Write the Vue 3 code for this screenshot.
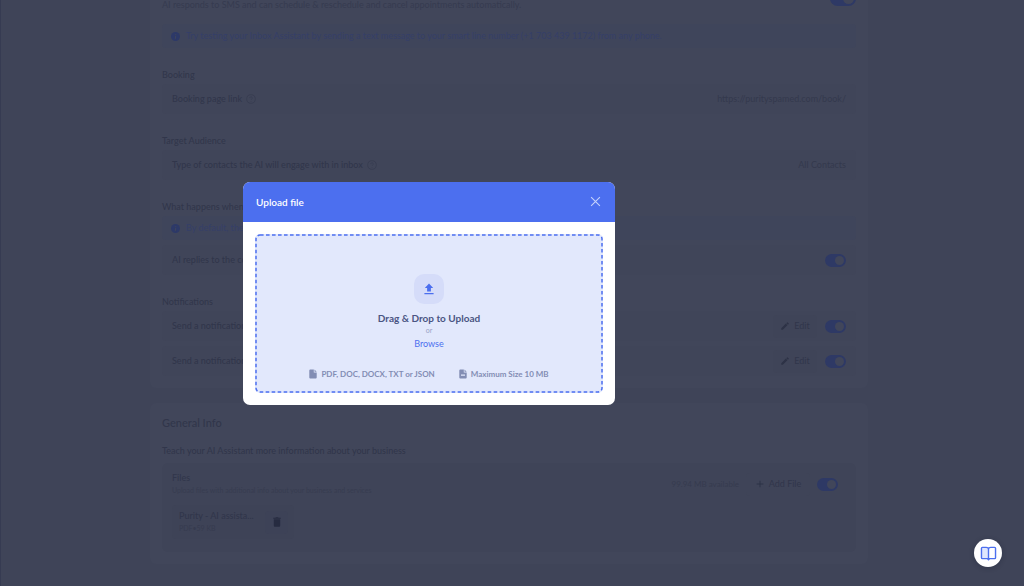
<script setup>
import { ref } from 'vue'

const assistant = ref(true)
const replies = ref(true)
const files = ref(true)
const notifications = ref([
  { id: 1, label: 'Send a notification', on: true },
  { id: 2, label: 'Send a notification', on: true },
])
</script>

<template>
  <div class="page">
    <main class="content">
      <section class="card first">
        <div class="intro">
          <p>AI responds to SMS and can schedule &amp; reschedule and cancel appointments automatically.</p>
          <input v-model="assistant" class="toggle large" type="checkbox" aria-label="Inbox Assistant" />
        </div>
        <div class="banner">
          <svg class="info" viewBox="0 0 10 10"><circle cx="5" cy="5" r="5" /><path d="M5.300 2.200v1M4.400 4.600h.8l-.4 2.800h.8" /></svg>
          <span>Try testing your Inbox Assistant by sending a text message to your smart line number (+1 703 439 1172) from any phone.</span>
        </div>

        <h3>Booking</h3>
        <div class="row">
          <span class="label">Booking page link</span>
          <svg class="help" viewBox="0 0 10 10"><circle cx="5" cy="5" r="4.4" /><path d="M3.7 4.1c0-1.8 2.7-1.7 2.7-.1 0 .9-1.4 1-1.4 2M5 7v.6" /></svg>
          <a class="value" href="#">https://purityspamed.com/book/</a>
        </div>

        <h3>Target Audience</h3>
        <div class="row">
          <span class="label">Type of contacts the AI will engage with in inbox</span>
          <svg class="help" viewBox="0 0 10 10"><circle cx="5" cy="5" r="4.4" /><path d="M3.7 4.1c0-1.8 2.7-1.7 2.7-.1 0 .9-1.4 1-1.4 2M5 7v.6" /></svg>
          <span class="value">All Contacts</span>
        </div>

        <h3>What happens when</h3>
        <div class="banner">
          <svg class="info" viewBox="0 0 10 10"><circle cx="5" cy="5" r="5" /><path d="M5.300 2.200v1M4.400 4.600h.8l-.4 2.800h.8" /></svg>
          <span>By default, the</span>
        </div>
        <div class="row stacked">
          <label class="label" for="replies">AI replies to the co</label>
          <input id="replies" v-model="replies" class="toggle end" type="checkbox" />
        </div>

        <h3>Notifications</h3>
        <div v-for="n in notifications" :key="n.id" class="row">
          <label class="label" :for="'notification-' + n.id">{{ n.label }}</label>
          <button class="btn edit end" type="button">
            <svg class="glyph" viewBox="0 0 24 24"><path d="M3 17.2V21h3.8L17.8 9.9l-3.7-3.7zM20.7 7a1 1 0 0 0 0-1.4l-2.3-2.3a1 1 0 0 0-1.4 0l-1.8 1.8 3.7 3.7z" /></svg>
            Edit
          </button>
          <input :id="'notification-' + n.id" v-model="n.on" class="toggle" type="checkbox" />
        </div>
      </section>

      <section class="card">
        <h2>General Info</h2>
        <p class="lead">Teach your AI Assistant more information about your business</p>
        <div class="files">
          <div class="files-head">
            <div class="files-title">
              <label for="files">Files</label>
              <p>Upload files with additional info about your business and services</p>
            </div>
            <span class="space">99.94 MB available</span>
            <button class="btn add" type="button">
              <svg class="glyph" viewBox="0 0 24 24"><path d="M10.800 4h2.400v6.800H20v2.400h-6.800V20h-2.400v-6.800H4v-2.400h6.800z" /></svg>
              Add File
            </button>
            <input id="files" v-model="files" class="toggle" type="checkbox" />
          </div>
          <div class="file">
            <div class="file-text">
              <strong>Purity - AI assista...</strong>
              <span>PDF•59 KB</span>
            </div>
            <button class="btn trash" type="button" aria-label="Delete file">
              <svg viewBox="0 0 8 10"><path d="M.3.8h2L3 .2h2l.7.6h2v1H.3zM.8 2.200h6.400v6.600q0 1-1 1H1.800q-1 0-1-1z" /></svg>
            </button>
          </div>
        </div>
      </section>
    </main>

    <div class="overlay">
      <div class="modal" role="dialog" aria-modal="true" aria-labelledby="modal-title">
        <header>
          <h1 id="modal-title">Upload file</h1>
          <button class="close" type="button" aria-label="Close">
            <svg viewBox="0 0 10 10"><path d="M1 1l8 8M9 1l-8 8" /></svg>
          </button>
        </header>
        <div class="body">
          <div class="dropzone">
            <svg class="frame" aria-hidden="true"><rect x="1" y="1" rx="4" /></svg>
            <span class="upload">
              <svg viewBox="0 0 10 12"><path d="M5 .6l4.200 4.400H6.900V8.600H3.100V5H.8zM.4 9.900h9.200v1.400H.4z" /></svg>
            </span>
            <strong>Drag &amp; Drop to Upload</strong>
            <span class="or">or</span>
            <button class="browse" type="button">Browse</button>
            <div class="hints">
              <span>
                <svg viewBox="0 0 8 10"><path d="M1 .5h3.800V3.400h2.900V8.500q0 1-1 1H1.300q-1 0-1-1v-7q0-1 1-1zM5.500.5l2.200 2.200H5.500z" /></svg>
                PDF, DOC, DOCX, TXT or JSON
              </span>
              <span>
                <svg viewBox="0 0 8 10"><path fill-rule="evenodd" d="M1.300.5h3.500V3.400h2.900V8.500q0 1-1 1H1.300q-1 0-1-1v-7q0-1 1-1zM5.500.5l2.200 2.200H5.500zM2 5.500v1.300h4V5.500z" /></svg>
                Maximum Size 10 MB
              </span>
            </div>
          </div>
        </div>
      </div>
    </div>

    <button class="guide" type="button" aria-label="Open guide">
      <svg viewBox="0 0 18 16">
        <path class="leaf" d="M2.500 1.500h4q2.500 0 2.500 2v10H2.500q-1 0-1-1v-10q0-1 1-1z" />
        <path d="M9 3.500q0-2 2.500-2h4q1 0 1 1v10q0 1-1 1H10L9 14.600l-1-1.100H2.500q-1 0-1-1v-10q0-1 1-1h4q2.500 0 2.500 2zv11" />
      </svg>
    </button>
  </div>
</template>

<style>
body {
  background: #3f4458;
}
</style>

<style scoped>
* {
  box-sizing: border-box;
}

.page {
  min-height: 100vh;
  display: flow-root;
  overflow: hidden;
  border-left: 1px solid #363b52;
  background: #3f4458;
  color: #31364b;
  font: 9px/12px Lato, "Liberation Sans", sans-serif;
}

h1, h2, h3, p {
  margin: 0;
}

button {
  border: 0;
  padding: 0;
  font: inherit;
  color: inherit;
  cursor: pointer;
}

.content {
  margin: -9px 156px 0 149px;
  display: flex;
  flex-direction: column;
  gap: 15px;
}

.card {
  padding: 12px;
  border-radius: 6px;
  background: #41465a;
}

.first {
  padding-top: 0;
}

.intro {
  height: 20px;
  margin-bottom: 13px;
  display: flex;
  align-items: flex-end;
  justify-content: space-between;
  color: #363b50;
}

.banner {
  height: 24px;
  padding: 0 9px;
  display: flex;
  align-items: center;
  gap: 6px;
  border-radius: 4px;
  background: #3f455b;
  color: #353f68;
}

.info {
  flex: none;
  width: 9px;
  height: 9px;
  fill: none;
  stroke: #41465a;
  stroke-width: 1;
}

.info circle {
  fill: #2d3968;
  stroke: none;
}

h3 {
  margin: 21px 0 3px;
  font-size: 9px;
  font-weight: 500;
}

.row {
  height: 30px;
  padding: 0 10px;
  display: flex;
  align-items: center;
  gap: 4px;
  border-radius: 4px;
  background: #404559;
}

.row + .row {
  margin-top: 5px;
}

.stacked {
  margin-top: 5px;
}

.label {
  font-weight: 500;
}

.help {
  width: 10px;
  height: 10px;
  fill: none;
  stroke: #373c50;
  stroke-width: 0.7;
}

.value {
  margin-left: auto;
  color: #34394d;
  text-decoration: none;
}

.end {
  margin-left: auto;
}

.btn {
  height: 23px;
  display: flex;
  align-items: center;
  justify-content: center;
  gap: 4px;
  border-radius: 4px;
  background: #3f4458;
}

.edit {
  width: 44px;
  margin-right: 4px;
}

.glyph {
  width: 10px;
  height: 10px;
  fill: #2d3246;
}

.toggle {
  appearance: none;
  flex: none;
  width: 21px;
  height: 13px;
  margin-block: 0;
  margin-right: 0;
  padding: 2px;
  display: flex;
  border-radius: 8px;
  background: #363b50;
}

.toggle:not(.end) {
  margin-left: 0;
}

.toggle::before {
  content: "";
  width: 9px;
  height: 9px;
  border-radius: 50%;
  background: #41465a;
}

.toggle:checked {
  justify-content: flex-end;
  background: #2e3965;
}

.large {
  width: 26px;
  height: 15px;
  align-self: flex-start;
}

.large::before {
  width: 11px;
  height: 11px;
}

h2 {
  font-size: 11px;
  line-height: 16px;
  font-weight: 500;
}

.lead {
  margin: 14px 0 6px;
  font-weight: 500;
}

.files {
  padding: 9px 18px 13px 10px;
  border-radius: 6px;
  background: #3f4458;
}

.files-head {
  display: flex;
  align-items: center;
}

.files-title {
  margin-right: auto;
}

.files-title label {
  font-weight: 500;
}

.files-title p {
  color: #373c50;
  font-size: 7px;
}

.space {
  color: #363b4f;
  font-size: 8px;
}

.add {
  width: 64px;
  margin: 0 7px;
}

.file {
  width: 122px;
  height: 34px;
  margin-top: 9px;
  padding: 0 6px 0 7px;
  display: flex;
  align-items: center;
  justify-content: space-between;
  border-radius: 4px;
  background: #3e4357;
}

.file-text {
  display: flex;
  flex-direction: column;
}

.file-text strong {
  font-weight: 500;
}

.file-text span {
  color: #363b4f;
  font-size: 7px;
}

.trash {
  width: 23px;
  background: #3d4257;
}

.trash svg {
  width: 8px;
  height: 10px;
  fill: #262b40;
}

.overlay {
  position: fixed;
  inset: 0;
  padding-right: 166px;
  display: flex;
  align-items: center;
  justify-content: center;
}

.modal {
  width: 372px;
  overflow: hidden;
  border-radius: 7px;
  background: #fff;
}

.modal header {
  height: 40px;
  padding: 0 14px 0 13px;
  display: flex;
  align-items: center;
  justify-content: space-between;
  background: #4c6fef;
  color: #fff;
}

h1 {
  font-size: 10px;
  font-weight: 600;
}

.close {
  width: 11px;
  height: 11px;
  background: none;
}

.close svg {
  display: block;
  width: 11px;
  height: 11px;
  fill: none;
  stroke: #c5d1fb;
  stroke-width: 1;
}

.body {
  padding: 12px;
}

.dropzone {
  position: relative;
  height: 159px;
  padding-top: 40px;
  display: flex;
  flex-direction: column;
  align-items: center;
  border-radius: 5px;
  background: #e2e8fc;
}

.frame {
  position: absolute;
  inset: 0;
  width: 100%;
  height: 100%;
}

.frame rect {
  width: calc(100% - 2px);
  height: calc(100% - 2px);
  fill: none;
  stroke: #4c6fef;
  stroke-width: 1.5;
  stroke-dasharray: 3.600 2.400;
}

.upload {
  width: 30px;
  height: 30px;
  display: grid;
  place-items: center;
  border-radius: 10px;
  background: #d5dcf9;
}

.upload svg {
  width: 10px;
  height: 12px;
  fill: #4c6fef;
}

.dropzone strong {
  margin-top: 7px;
  color: #4a5583;
  font-size: 10px;
  line-height: 14px;
}

.or {
  color: #99a3c6;
  font-size: 7px;
  line-height: 10px;
}

.browse {
  position: relative;
  margin-top: 2px;
  background: none;
  color: #4c6fef;
  line-height: 13px;
}

.hints {
  margin-top: 18px;
  display: flex;
  gap: 24px;
  color: #828db4;
  font-size: 8px;
  font-weight: 700;
}

.hints span {
  display: flex;
  align-items: center;
  gap: 4px;
}

.hints svg {
  width: 8px;
  height: 10px;
  fill: #828db4;
}

.guide {
  position: fixed;
  right: 22px;
  bottom: 19px;
  width: 28px;
  height: 28px;
  display: grid;
  place-items: center;
  border-radius: 50%;
  background: #fff;
  box-shadow: 0 1px 5px rgba(20, 25, 45, 0.3);
}

.guide svg {
  width: 17px;
  height: 15px;
  fill: none;
  stroke: #4c6fef;
  stroke-width: 1.5;
  stroke-linejoin: round;
  stroke-linecap: round;
}

.guide .leaf {
  fill: #dfe6fd;
  stroke: none;
}
</style>
